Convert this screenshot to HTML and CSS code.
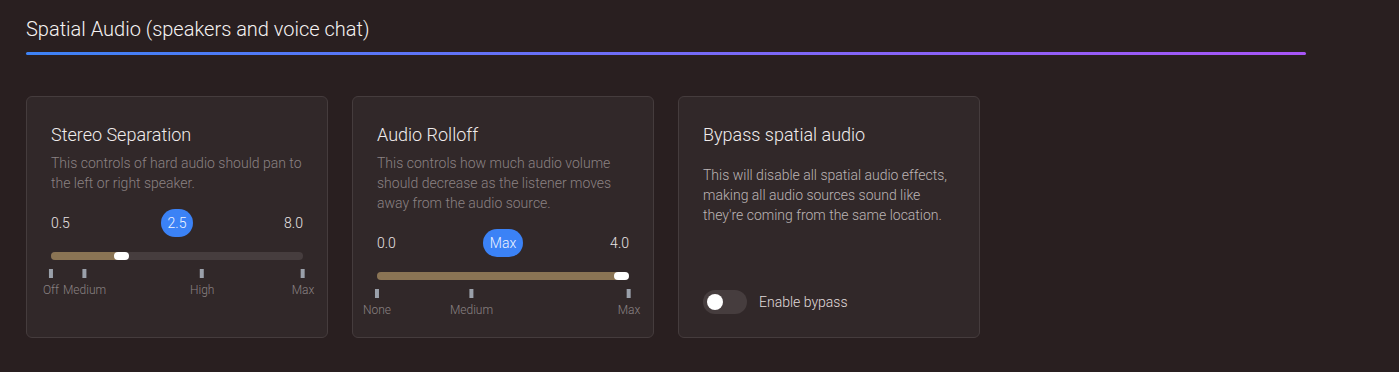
FILE: index.html
```html
<!DOCTYPE html>
<html lang="en">
<head>
<meta charset="utf-8">
<title>Spatial Audio</title>
<link rel="stylesheet" href="styles.css">
</head>
<body>
<section class="section">
  <h2 class="section-title">Spatial Audio (speakers and voice chat)</h2>
  <div class="section-rule"></div>

  <div class="cards">
    <div class="card">
      <h3 class="card-title">Stereo Separation</h3>
      <p class="card-desc">This controls of hard audio should pan to the left or right speaker.</p>
      <div class="values">
        <span class="val">0.5</span>
        <span class="pill">2.5</span>
        <span class="val">8.0</span>
      </div>
      <div class="track">
        <div class="fill" style="--p:0.2667"></div>
        <div class="thumb" style="--p:0.2667"></div>
      </div>
      <div class="ticks">
        <div class="tick" style="left:0%"><span class="tick-bar"></span><span class="tick-label">Off</span></div>
        <div class="tick" style="left:13.33%"><span class="tick-bar"></span><span class="tick-label">Medium</span></div>
        <div class="tick" style="left:60%"><span class="tick-bar"></span><span class="tick-label">High</span></div>
        <div class="tick" style="left:100%"><span class="tick-bar"></span><span class="tick-label">Max</span></div>
      </div>
    </div>

    <div class="card">
      <h3 class="card-title">Audio Rolloff</h3>
      <p class="card-desc">This controls how much audio volume should decrease as the listener moves away from the audio source.</p>
      <div class="values">
        <span class="val">0.0</span>
        <span class="pill">Max</span>
        <span class="val">4.0</span>
      </div>
      <div class="track">
        <div class="fill" style="--p:1"></div>
        <div class="thumb" style="--p:1"></div>
      </div>
      <div class="ticks">
        <div class="tick" style="left:0%"><span class="tick-bar"></span><span class="tick-label">None</span></div>
        <div class="tick" style="left:37.5%"><span class="tick-bar"></span><span class="tick-label">Medium</span></div>
        <div class="tick" style="left:100%"><span class="tick-bar"></span><span class="tick-label">Max</span></div>
      </div>
    </div>

    <div class="card">
      <h3 class="card-title">Bypass spatial audio</h3>
      <p class="card-desc card-desc-light">This will disable all spatial audio effects, making all audio sources sound like they're coming from the same location.</p>
      <label class="toggle-row">
        <span class="toggle"><span class="toggle-knob"></span></span>
        <span class="toggle-text">Enable bypass</span>
      </label>
    </div>
  </div>
</section>
</body>
</html>
```

FILE: styles.css
```css
* { box-sizing: border-box; }

html, body {
  margin: 0;
  padding: 0;
  background: #291f20;
  font-family: Roboto, "Noto Sans", sans-serif;
  font-weight: 300;
  color: #ece7e7;
}

.section {
  padding: 15px 0 0 26px;
  width: 1306px;
}

.section-title {
  margin: 0;
  font-size: 20px;
  line-height: 28px;
  font-weight: 300;
  color: #f6f3f3;
}

.section-rule {
  margin-top: 9px;
  height: 3px;
  border-radius: 2px;
  background: linear-gradient(90deg, #3d82f6 0%, #a855f7 100%);
}

.cards {
  display: flex;
  gap: 24px;
  margin-top: 41px;
}

.card {
  width: 302px;
  background: #312829;
  border: 1px solid #453c3d;
  border-radius: 6px;
  padding: 24px 24px 24px 24px;
  display: flex;
  flex-direction: column;
}

.card-title {
  margin: 0;
  font-size: 18px;
  line-height: 28px;
  font-weight: 300;
  color: #f0ecec;
}

.card-desc {
  margin: 4px 0 0;
  font-size: 14px;
  line-height: 20px;
  color: #8b8283;
}

.card-desc-light {
  margin-top: 16px;
  color: #bcb5b5;
}

.values {
  margin-top: 16px;
  height: 28px;
  display: flex;
  align-items: center;
  justify-content: space-between;
}

.val {
  font-size: 14px;
  color: #e8e3e3;
}

.pill {
  height: 28px;
  line-height: 28px;
  padding: 0 7px;
  border-radius: 14px;
  background: #3b82f6;
  color: #eef3ff;
  font-size: 14px;
}

.track {
  position: relative;
  margin-top: 15px;
  height: 8px;
  border-radius: 4px;
  background: #463d3e;
}

.fill {
  height: 8px;
  border-radius: 4px;
  background: #8a7454;
  width: calc(var(--p) * (100% - 15px) + 7px);
}

.thumb {
  position: absolute;
  top: 0;
  left: calc(var(--p) * (100% - 15px));
  width: 15px;
  height: 8px;
  border-radius: 4px;
  background: #ffffff;
}

.ticks {
  position: relative;
  margin-top: 9px;
  height: 24px;
}

.tick {
  position: absolute;
  top: 0;
  transform: translateX(-50%);
  display: flex;
  flex-direction: column;
  align-items: center;
}

.tick-bar {
  width: 4px;
  height: 9px;
  background: #9aa0aa;
}

.tick-label {
  margin-top: 5px;
  font-size: 12px;
  line-height: 14px;
  color: #8a8283;
  white-space: nowrap;
}

.toggle-row {
  margin-top: auto;
  margin-bottom: -1px;
  display: flex;
  align-items: center;
  gap: 12px;
}

.toggle {
  position: relative;
  width: 44px;
  height: 24px;
  border-radius: 12px;
  background: #463d3e;
  display: flex;
  align-items: center;
  padding-left: 4px;
}

.toggle-knob {
  width: 16px;
  height: 16px;
  border-radius: 50%;
  background: #ffffff;
}

.toggle-text {
  font-size: 14px;
  color: #e0dbdb;
}
```
